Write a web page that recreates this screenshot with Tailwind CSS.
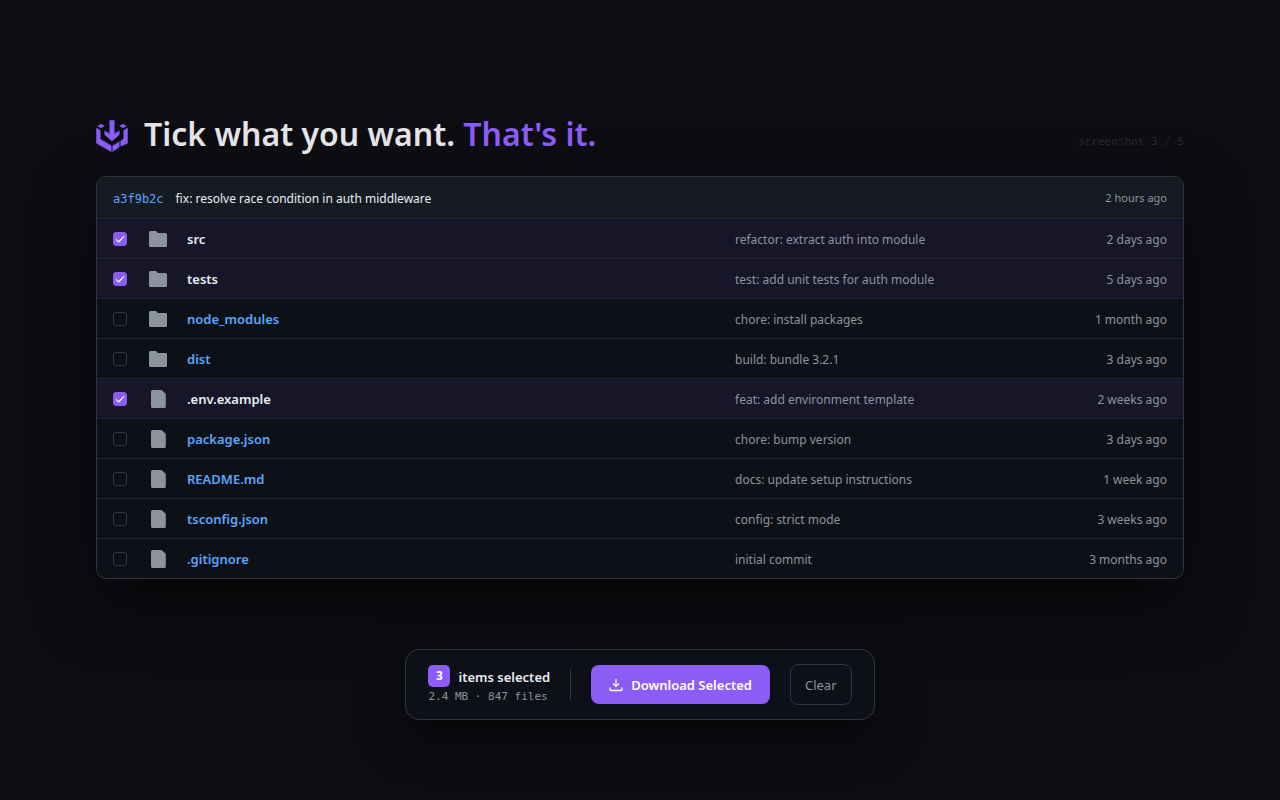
<!DOCTYPE html>
<html lang="en">
<head>
    <meta charset="UTF-8">
    <meta name="viewport" content="width=device-width, initial-scale=1.0">
    <title>Tick what you want</title>
    <script src="https://cdn.jsdelivr.net/npm/@tailwindcss/browser@4"></script>
</head>
<body class="min-h-screen bg-[#0e0d12] px-24 pt-28 pb-20 font-['Noto_Sans',sans-serif] text-[#e6edf3]">
    <!-- Icons -->
    <svg class="hidden">
        <symbol id="folder" viewBox="0 0 18 18">
            <path d="M0 2.500A1.500 1.500 0 0 1 1.500 1h5a1.500 1.500 0 0 1 1.200.6L8.800 3h7.700A1.500 1.500 0 0 1 18 4.500v11a1.500 1.500 0 0 1-1.500 1.500h-15A1.500 1.500 0 0 1 0 15.500z"/>
        </symbol>
        <symbol id="file" viewBox="0 0 18 18">
            <path d="M2 1.500A1.500 1.500 0 0 1 3.500 0h8.700a1.500 1.500 0 0 1 1 .4l3.100 3.200a1.500 1.500 0 0 1 .5 1v11.900a1.500 1.500 0 0 1-1.500 1.500H3.500A1.500 1.500 0 0 1 2 16.500z"/>
        </symbol>
        <symbol id="check" viewBox="0 0 14 14">
            <path d="M3 7.3 5.6 10 11 4.3" fill="none" stroke="#fff" stroke-width="1.2"/>
        </symbol>
    </svg>

    <header class="flex items-end justify-between">
        <div class="flex items-center gap-4">
            <svg class="mt-1 size-8" viewBox="0 0 96 96" fill="#8b5cf6" stroke="#8b5cf6" stroke-opacity="0.5" stroke-width="2">
                <path d="M41 1h14v40l15-9v12L48 63 26 44V32l15 9z"/>
                <path d="M1 24l12 7v26l33 20v18L1 70z"/>
                <path d="M50 77l20-12v16L50 95zM74 62l9-6V31l12-7v46l-21 9z"/>
                <path d="M5 18l10-6 10 6-10 6zM71 18l10-6 10 6-10 6z"/>
            </svg>
            <h1 class="text-[32px] leading-11 font-semibold text-[#e4e4e7]">Tick what you want. <span class="text-[#8b5cf6]">That's it.</span></h1>
        </div>
        <span class="pb-1.5 font-['DejaVu_Sans_Mono',monospace] text-[11px] leading-4 text-[#27272a]">screenshot 3 / 5</span>
    </header>

    <main class="mt-5 overflow-hidden rounded-[10px] border border-[#30363d] bg-[#0d1117] shadow-[0_24px_64px_rgba(0,0,0,0.6)]">
        <div class="flex h-[42px] items-center gap-3 border-b border-[#21262d] bg-[#161b22] px-4 pt-0.5 text-[12px]">
            <a href="#" class="font-['DejaVu_Sans_Mono',monospace] text-[#58a6ff]">a3f9b2c</a>
            <span>fix: resolve race condition in auth middleware</span>
            <span class="ml-auto text-[11px] text-[#8b949e]">2 hours ago</span>
        </div>
        <table class="w-full table-fixed border-separate border-spacing-0 text-[12px] text-[#8b949e]">
            <colgroup>
                <col class="w-[52px]">
                <col class="w-[38px]">
                <col>
                <col class="w-[312px]">
                <col class="w-[136px]">
            </colgroup>
            <tbody id="files"></tbody>
        </table>
    </main>

    <section class="mx-auto mt-[70px] flex w-fit items-center gap-5 rounded-[14px] border border-[#30363d] bg-[#0d1117] px-[22px] py-3.5 shadow-[0_16px_48px_rgba(0,0,0,0.6)]">
        <div class="flex flex-col gap-0.5">
            <div class="flex items-center gap-2 text-[13px] font-semibold">
                <span class="flex size-[22px] items-center justify-center rounded-[5px] bg-[#8b5cf6] text-[12px] font-bold text-white">3</span>
                <span class="pt-0.5 leading-5">items selected</span>
            </div>
            <div class="font-['DejaVu_Sans_Mono',monospace] text-[11px] leading-4 text-[#8b949e]">2.4 MB · 847 files</div>
        </div>
        <div class="h-8 w-px bg-[#30363d]"></div>
        <button type="button" class="flex h-[39px] items-center gap-2 rounded-lg bg-[#8b5cf6] px-[18px] text-[13px] font-semibold text-white">
            <svg class="size-3.5" viewBox="0 0 14 14" fill="none" stroke="currentColor" stroke-width="1.3" stroke-linecap="round" stroke-linejoin="round">
                <path d="M7 1.5v7M4.5 6 7 8.5 9.500 6M1 10v1.500a1 1 0 0 0 1 1h10a1 1 0 0 0 1-1V10"/>
            </svg>
            <span class="pt-0.5">Download Selected</span>
        </button>
        <button type="button" class="h-[41px] rounded-lg border border-[#30363d] px-3.5 pt-0.5 text-[13px] text-[#8b949e]">Clear</button>
    </section>

    <script>
        const files = [
            { name: 'src', icon: 'folder', message: 'refactor: extract auth into module', time: '2 days ago', checked: true },
            { name: 'tests', icon: 'folder', message: 'test: add unit tests for auth module', time: '5 days ago', checked: true },
            { name: 'node_modules', icon: 'folder', message: 'chore: install packages', time: '1 month ago' },
            { name: 'dist', icon: 'folder', message: 'build: bundle 3.2.1', time: '3 days ago' },
            { name: '.env.example', icon: 'file', message: 'feat: add environment template', time: '2 weeks ago', checked: true },
            { name: 'package.json', icon: 'file', message: 'chore: bump version', time: '3 days ago' },
            { name: 'README.md', icon: 'file', message: 'docs: update setup instructions', time: '1 week ago' },
            { name: 'tsconfig.json', icon: 'file', message: 'config: strict mode', time: '3 weeks ago' },
            { name: '.gitignore', icon: 'file', message: 'initial commit', time: '3 months ago' },
        ];

        document.getElementById('files').innerHTML = files.map((file) => `
            <tr class="group h-10 last:h-[39px] has-checked:bg-[#8b5cf6]/8 *:border-b *:border-[#21262d] last:*:border-b-0">
                <td class="pl-4">
                    <label class="grid size-3.5">
                        <input type="checkbox" aria-label="Select ${file.name}" ${file.checked ? 'checked' : ''}
                               class="peer col-start-1 row-start-1 size-3.5 appearance-none rounded-[3px] border border-[#30363d] checked:border-[#8b5cf6] checked:bg-[#8b5cf6]">
                        <svg class="pointer-events-none invisible col-start-1 row-start-1 size-3.5 peer-checked:visible"><use href="#check"/></svg>
                    </label>
                </td>
                <td><svg class="size-[18px] fill-[#8b949e]"><use href="#${file.icon}"/></svg></td>
                <td class="pt-0.5"><a href="#" class="text-[13px] font-semibold text-[#58a6ff] group-has-checked:text-[#e6edf3]">${file.name}</a></td>
                <td class="pt-0.5">${file.message}</td>
                <td class="pt-0.5 pr-4 text-right">${file.time}</td>
            </tr>
        `).join('');
    </script>
</body>
</html>
